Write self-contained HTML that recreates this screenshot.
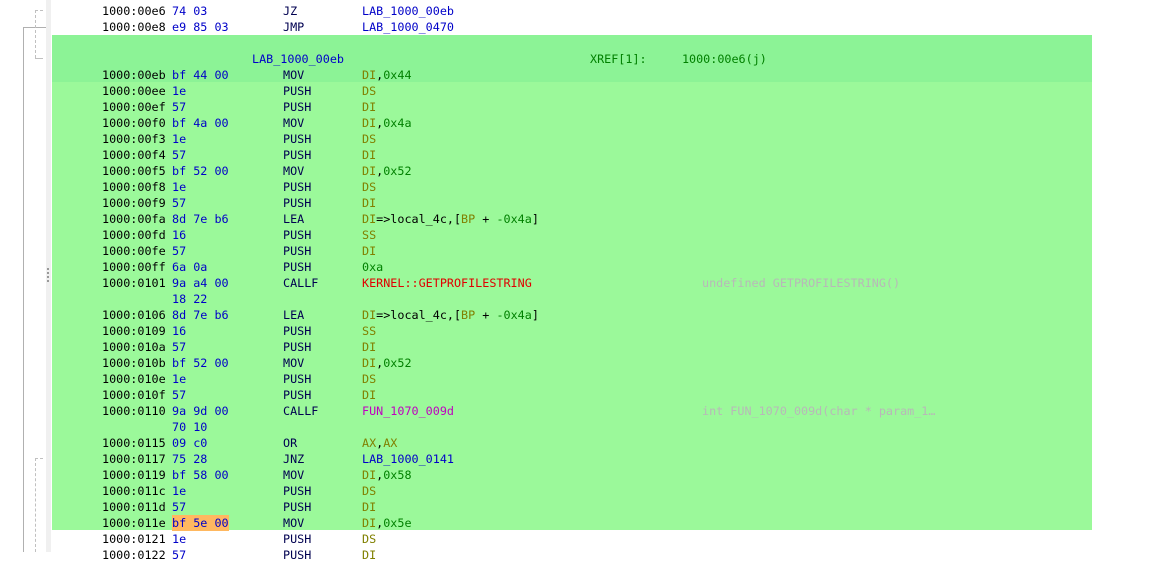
<!DOCTYPE html>
<html><head><style>
body{margin:0;width:1153px;height:552px;background:#fff;position:relative;overflow:hidden;font-family:"DejaVu Sans Mono","Liberation Mono",monospace;font-size:11.75px}
.b{position:absolute;left:52px;width:1040px}
.r{position:absolute;height:16px;line-height:16px;white-space:pre}
.a{color:#000}.h{color:#0000c8}.m{color:#000050}.g{color:#008000}.o{color:#808000}.l{color:#0000c8}
.k{color:#e00000}.f{color:#c000c0}.c{color:#b8b8b8}
</style></head><body>
<div class="b" style="top:35px;height:47px;background:#8cf396"></div>
<div class="b" style="top:82px;height:448px;background:#9bf99a"></div>
<div style="position:absolute;left:46px;top:0;width:5px;height:552px;background:#f0f0f0"></div>
<div style="position:absolute;left:23px;top:27px;width:1px;height:525px;background:#b0b0b0"></div>
<div style="position:absolute;left:23px;top:27px;width:23px;height:1px;background:#b0b0b0"></div>
<div style="position:absolute;left:35px;top:10px;width:0;height:48px;border-left:1px dashed #c0c0c0"></div>
<div style="position:absolute;left:35px;top:10px;width:8px;height:0;border-top:1px dashed #c0c0c0"></div>
<div style="position:absolute;left:35px;top:58px;width:8px;height:1px;background:#c0c0c0"></div>
<div style="position:absolute;left:35px;top:458px;width:0;height:94px;border-left:1px dashed #c0c0c0"></div>
<div style="position:absolute;left:35px;top:458px;width:8px;height:0;border-top:1px dashed #c0c0c0"></div>
<div style="position:absolute;left:47px;top:268px;width:2px;height:14px;border-left:2px dotted #999"></div>
<div style="position:absolute;left:172px;top:515px;width:57px;height:16px;background:#ffb860"></div>
<div id="rows"></div>
<div class="r l" style="top:51px;left:252px">LAB_1000_00eb</div>
<div class="r g" style="top:51px;left:590px">XREF[1]:     1000:00e6(j)</div>
<script>
var R=[
[3,"1000:00e6","74 03","JZ",'<span class="l">LAB_1000_00eb</span>'],
[19,"1000:00e8","e9 85 03","JMP",'<span class="l">LAB_1000_0470</span>'],
[67,"1000:00eb","bf 44 00","MOV",'<span class="o">DI</span>,<span class="g">0x44</span>'],
[83,"1000:00ee","1e","PUSH",'<span class="o">DS</span>'],
[99,"1000:00ef","57","PUSH",'<span class="o">DI</span>'],
[115,"1000:00f0","bf 4a 00","MOV",'<span class="o">DI</span>,<span class="g">0x4a</span>'],
[131,"1000:00f3","1e","PUSH",'<span class="o">DS</span>'],
[147,"1000:00f4","57","PUSH",'<span class="o">DI</span>'],
[163,"1000:00f5","bf 52 00","MOV",'<span class="o">DI</span>,<span class="g">0x52</span>'],
[179,"1000:00f8","1e","PUSH",'<span class="o">DS</span>'],
[195,"1000:00f9","57","PUSH",'<span class="o">DI</span>'],
[211,"1000:00fa","8d 7e b6","LEA",'<span class="o">DI</span>=&gt;local_4c,[<span class="o">BP</span> + <span class="g">-0x4a</span>]'],
[227,"1000:00fd","16","PUSH",'<span class="o">SS</span>'],
[243,"1000:00fe","57","PUSH",'<span class="o">DI</span>'],
[259,"1000:00ff","6a 0a","PUSH",'<span class="g">0xa</span>'],
[275,"1000:0101","9a a4 00","CALLF",'<span class="k">KERNEL::GETPROFILESTRING</span>'],
[291,"","18 22","",""],
[307,"1000:0106","8d 7e b6","LEA",'<span class="o">DI</span>=&gt;local_4c,[<span class="o">BP</span> + <span class="g">-0x4a</span>]'],
[323,"1000:0109","16","PUSH",'<span class="o">SS</span>'],
[339,"1000:010a","57","PUSH",'<span class="o">DI</span>'],
[355,"1000:010b","bf 52 00","MOV",'<span class="o">DI</span>,<span class="g">0x52</span>'],
[371,"1000:010e","1e","PUSH",'<span class="o">DS</span>'],
[387,"1000:010f","57","PUSH",'<span class="o">DI</span>'],
[403,"1000:0110","9a 9d 00","CALLF",'<span class="f">FUN_1070_009d</span>'],
[419,"","70 10","",""],
[435,"1000:0115","09 c0","OR",'<span class="o">AX</span>,<span class="o">AX</span>'],
[451,"1000:0117","75 28","JNZ",'<span class="l">LAB_1000_0141</span>'],
[467,"1000:0119","bf 58 00","MOV",'<span class="o">DI</span>,<span class="g">0x58</span>'],
[483,"1000:011c","1e","PUSH",'<span class="o">DS</span>'],
[499,"1000:011d","57","PUSH",'<span class="o">DI</span>'],
[515,"1000:011e","bf 5e 00","MOV",'<span class="o">DI</span>,<span class="g">0x5e</span>'],
[531,"1000:0121","1e","PUSH",'<span class="o">DS</span>'],
[547,"1000:0122","57","PUSH",'<span class="o">DI</span>']];
var h="";R.forEach(function(x){var t=x[0];
h+='<div class="r a" style="top:'+t+'px;left:102px">'+x[1]+'</div><div class="r h" style="top:'+t+'px;left:172px">'+x[2]+'</div><div class="r m" style="top:'+t+'px;left:283px">'+x[3]+'</div><div class="r" style="top:'+t+'px;left:362px">'+x[4]+'</div>';});
h+='<div class="r c" style="top:275px;left:702px">undefined GETPROFILESTRING()</div>';
h+='<div class="r c" style="top:403px;left:702px">int FUN_1070_009d(char * param_1…</div>';
document.getElementById("rows").innerHTML=h;
</script>
</body></html>
